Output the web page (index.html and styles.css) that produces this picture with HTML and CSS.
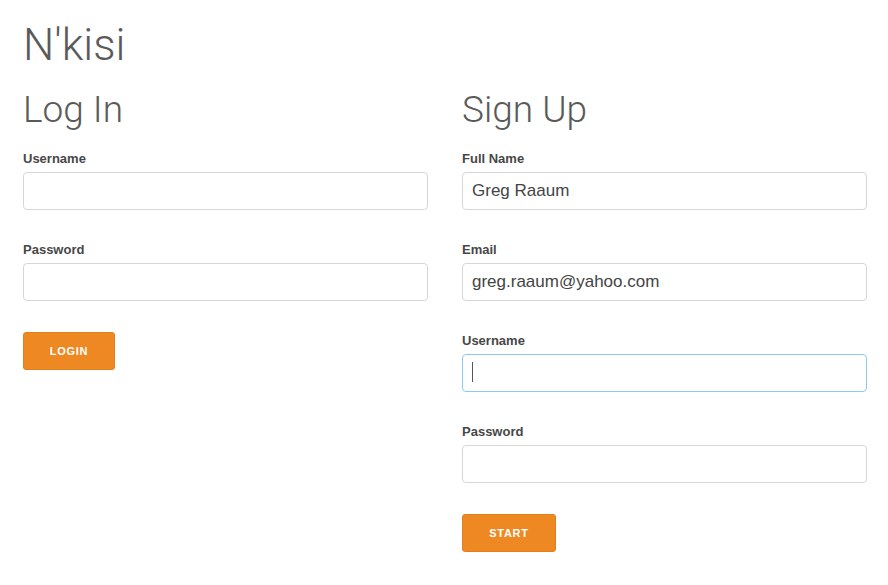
FILE: index.html
```html
<!DOCTYPE html>
<html lang="en">
<head>
<meta charset="utf-8">
<title>N'kisi</title>
<link rel="stylesheet" href="styles.css">
</head>
<body>
<h1 class="brand">N'kisi</h1>
<main class="columns">
  <section class="panel">
    <h2 class="panel-title">Log In</h2>
    <div class="field">
      <label class="label">Username</label>
      <input class="input" type="text">
    </div>
    <div class="field">
      <label class="label">Password</label>
      <input class="input" type="password">
    </div>
    <button class="btn">LOGIN</button>
  </section>
  <section class="panel">
    <h2 class="panel-title">Sign Up</h2>
    <div class="field">
      <label class="label">Full Name</label>
      <input class="input" type="text" value="Greg Raaum">
    </div>
    <div class="field">
      <label class="label">Email</label>
      <input class="input" type="text" value="greg.raaum@yahoo.com">
    </div>
    <div class="field">
      <label class="label">Username</label>
      <span class="input-wrap">
        <input class="input input-focus" type="text">
        <span class="caret"></span>
      </span>
    </div>
    <div class="field">
      <label class="label">Password</label>
      <input class="input" type="password">
    </div>
    <button class="btn btn-start">START</button>
  </section>
</main>
</body>
</html>
```

FILE: styles.css
```css
html, body {
  margin: 0;
  padding: 0;
  background: #ffffff;
}
body {
  padding: 17px 21px 0 23px;
  font-family: "Liberation Sans", Arial, sans-serif;
  color: #555;
}
.brand {
  margin: 0;
  font-family: Roboto, "Liberation Sans", sans-serif;
  font-weight: 300;
  font-size: 44px;
  line-height: 56px;
  color: #5a5a5a;
}
.columns {
  display: grid;
  grid-template-columns: 405px 405px;
  column-gap: 34px;
  margin-top: 15px;
}
.panel {
  display: flex;
  flex-direction: column;
  align-items: flex-start;
}
.panel-title {
  margin: 0 0 18px 0;
  font-family: Roboto, "Liberation Sans", sans-serif;
  font-weight: 300;
  font-size: 37px;
  line-height: 44px;
  color: #5a5a5a;
}
.field {
  display: flex;
  flex-direction: column;
  width: 100%;
  margin-bottom: 31px;
}
.label {
  font-size: 13px;
  font-weight: bold;
  line-height: 18px;
  color: #474747;
  margin-bottom: 4px;
}
.input-wrap {
  position: relative;
  display: block;
}
.input {
  box-sizing: border-box;
  display: block;
  width: 100%;
  height: 38px;
  margin: 0;
  padding: 0 9px;
  border: 1px solid #d6d6d6;
  border-radius: 4px;
  background: #fff;
  font-family: "Liberation Sans", Arial, sans-serif;
  font-size: 17px;
  color: #444;
  outline: none;
}
.input-focus {
  border-color: #8ccaf0;
}
.caret {
  position: absolute;
  left: 10px;
  top: 8px;
  width: 1px;
  height: 20px;
  background: #555;
}
.btn {
  box-sizing: border-box;
  height: 38px;
  width: 92px;
  padding: 0;
  border: 1px solid #e0801c;
  border-radius: 3px;
  background: #ee8822;
  color: #fff;
  font-family: "Liberation Sans", Arial, sans-serif;
  font-size: 11px;
  font-weight: bold;
  letter-spacing: 0.7px;
  cursor: pointer;
}
.btn-start {
  width: 94px;
}
```
